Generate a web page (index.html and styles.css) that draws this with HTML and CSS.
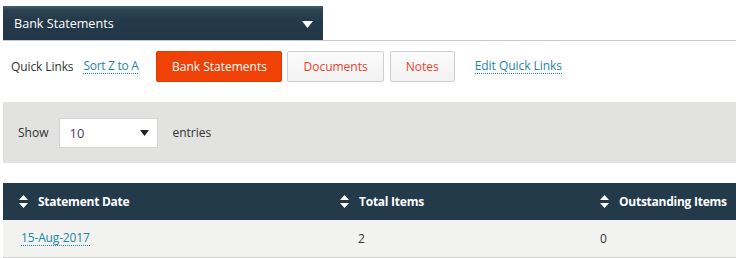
FILE: index.html
```html
<!DOCTYPE html>
<html>
<head>
<meta charset="utf-8">
<link rel="stylesheet" href="styles.css">
</head>
<body>
<div class="page">
  <div class="topline">
    <div class="picker">
      <span class="picker-label">Bank Statements</span>
      <svg class="picker-caret" width="11" height="7" viewBox="0 0 11 7"><path d="M0 0H11L5.5 7Z" fill="#fff"/></svg>
    </div>
  </div>
  <div class="quick">
    <span class="quick-title">Quick Links</span>
    <a class="link sort">Sort Z to A</a>
    <span class="btn btn-primary">Bank Statements</span>
    <span class="btn btn-default">Documents</span>
    <span class="btn btn-default">Notes</span>
    <a class="link edit">Edit Quick Links</a>
  </div>
  <div class="panel">
    <span class="lbl">Show</span>
    <div class="select"><span class="val">10</span><svg width="9" height="6" viewBox="0 0 9 6"><path d="M0 0H9L4.5 6Z" fill="#222"/></svg></div>
    <span class="lbl">entries</span>
  </div>
  <div class="table">
    <div class="thead">
      <div class="th c1"><svg class="sort-ic" width="9" height="13" viewBox="0 0 9 13"><path d="M4.5 0L9 5H0Z M0 8H9L4.5 13Z" fill="#fff"/></svg>Statement Date</div>
      <div class="th c2"><svg class="sort-ic" width="9" height="13" viewBox="0 0 9 13"><path d="M4.5 0L9 5H0Z M0 8H9L4.5 13Z" fill="#fff"/></svg>Total Items</div>
      <div class="th c3"><svg class="sort-ic" width="9" height="13" viewBox="0 0 9 13"><path d="M4.5 0L9 5H0Z M0 8H9L4.5 13Z" fill="#fff"/></svg>Outstanding Items</div>
    </div>
    <div class="trow">
      <div class="td d1"><a class="link">15-Aug-2017</a></div>
      <div class="td d2">2</div>
      <div class="td d3">0</div>
    </div>
  </div>
</div>
</body>
</html>
```
FILE: styles.css
```css
* { box-sizing: border-box; }
html, body { margin: 0; padding: 0; background: #fff; }
body { font-family: "Open Sans", "Noto Sans", sans-serif; font-size: 12px; color: #333; }
.page { padding: 6px 0 0 3px; width: 736px; }
.topline { border-bottom: 1px solid #c8c8c8; height: 35px; }
.picker {
  width: 320px; height: 34px;
  background: linear-gradient(#4a5f6e 0px, #2e4555 3px, #243a4a 14px, #213646 100%);
  display: flex; align-items: center; justify-content: space-between;
  padding: 0 10px 0 11px;
}
.picker-label { color: #fff; font-size: 12.6px; }
.picker-caret { margin-top: 2px; }
.quick { display: flex; align-items: center; height: 31px; margin-top: 10px; padding-left: 8px; }
.quick-title { color: #333; margin-right: 10px; letter-spacing: -0.1px; }
.link { color: #1e86a6; border-bottom: 1px dotted #1e86a6; line-height: 14px; }
.sort { margin-right: 18px; letter-spacing: -0.3px; }
.btn { height: 31px; display: flex; align-items: center; justify-content: center; border-radius: 2px; font-size: 12px; }
.btn-primary { background: #f04106; color: #fff; width: 126px; border: 1px solid #e03a02; margin-right: 5px; }
.btn-default { background: linear-gradient(#fbfbfb, #f2f2f2); border: 1px solid #cfcfcf; color: #f0402a; padding: 0 15px; margin-right: 6px; }
.btn-default + .btn-default { margin-right: 20px; }
.edit { letter-spacing: -0.05px; }
.panel { margin-top: 20px; height: 61px; background: #e2e2e0; display: flex; align-items: center; padding-left: 15px; }
.lbl { color: #333; }
.select { width: 99px; height: 30px; background: #fff; border: 1px solid #d4d4d4; margin: 0 14px 0 11px; display: flex; align-items: center; justify-content: space-between; padding: 0 8px 0 9px; }
.val { color: #4b3d66; font-size: 13px; }
.table { margin-top: 20px; }
.thead { display: flex; height: 37px; background: #233a4a; }
.th { color: #fff; font-weight: bold; display: flex; align-items: center; padding-left: 16px; letter-spacing: -0.25px; }
.sort-ic { margin-right: 10px; }
.c1, .d1 { width: 321px; }
.c2, .d2 { width: 260px; }
.c3, .d3 { flex: 1; }
.trow { display: flex; height: 38px; background: #f2f2f0; border-bottom: 1px solid #d2d2d2; }
.td { display: flex; align-items: center; }
.d1 { padding-left: 18px; }
.d1 .link { letter-spacing: -0.15px; }
.d2 { padding-left: 34px; }
.d3 { padding-left: 16px; }
```
